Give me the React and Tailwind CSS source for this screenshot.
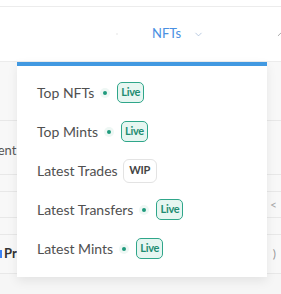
import { ChevronDown } from 'lucide-react'

const items = [
  { label: 'Top NFTs', status: 'live' },
  { label: 'Top Mints', status: 'live' },
  { label: 'Latest Trades', status: 'wip' },
  { label: 'Latest Transfers', status: 'live' },
  { label: 'Latest Mints', status: 'live' },
]

function LiveBadge() {
  return (
    <div className="ml-[6px] flex items-center gap-[7px]">
      <span className="flex h-[10px] w-[10px] items-center justify-center rounded-full bg-[#eef7f4]">
        <span className="h-[4px] w-[4px] rounded-full bg-[#1f9a7c]" />
      </span>
      <span className="flex h-[21px] w-[27px] items-center justify-center rounded-[5px] border border-[#2fa68a] bg-[#e7f6f1] text-[11px] font-bold tracking-[-0.3px] text-[#1f8d72]">
        Live
      </span>
    </div>
  )
}

function WipBadge() {
  return (
    <span className="ml-[5px] flex h-[24px] w-[34px] items-center justify-center rounded-[6px] border border-[#e3e3e3] bg-white text-[11px] font-bold tracking-[-0.3px] text-[#444]">
      WIP
    </span>
  )
}

function App() {
  return (
    <div
      className="relative h-[294px] w-[281px] overflow-hidden bg-white"
      style={{ fontFamily: 'Lato, "Noto Sans", sans-serif' }}
    >
      <div className="h-[7px] border-b border-[#ececec]" />
      <div className="flex h-[55px] items-center border-b border-[#ececec]">
        <span className="ml-[116px] h-[2px] w-[2px] rounded-full bg-[#eee]" />
        <span className="ml-[34px] text-[13px] text-[#4a90e2]">NFTs</span>
        <ChevronDown size={11} strokeWidth={1.5} className="ml-[12px] text-[#9bb3d4]" />
        <ChevronDown size={9} strokeWidth={1.5} className="ml-auto mr-[-4px] rotate-180 text-[#666]" />
      </div>

      <div className="bg-[#f8f8f8]">
        <div className="h-[59px] border-b border-[#e8e8e8]" />
        <div className="flex h-[54px] items-center border-b border-[#e8e8e8] pt-[6px] text-[13px] text-[#555]">
          <span className="ml-[-23px]">Recent</span>
        </div>
        <div className="flex h-[17px] border-b border-[#e8e8e8]" />
        <div className="flex h-[26px] items-center justify-end border-b border-[#e8e8e8] pr-[4px] text-[12px] text-[#aaa]">
          &lt;
        </div>
        <div className="h-[17px] border-b border-[#e8e8e8]" />
        <div className="flex h-[39px] items-center border-b border-[#e8e8e8] text-[13px]">
          <span className="h-[8px] w-[2px] bg-[#3b82f6]" />
          <span className="ml-[2px] font-bold text-[#333]">Pr</span>
          <span className="ml-auto pr-[5px] text-[12px] text-[#999]">)</span>
        </div>
        <div className="h-[30px] bg-[#f6f6f6]" />
      </div>

      <div className="absolute left-[17px] top-[62px] w-[250px] border-t-4 border-[#4299e1] bg-white pb-[9px] pt-[7px] shadow-[0_4px_10px_rgba(0,0,0,0.08)]">
        {items.map((item) => (
          <div key={item.label} className="flex h-[39px] items-center pl-[20px]">
            <span className="text-[14px] text-[#505050]">{item.label}</span>
            {item.status === 'live' ? <LiveBadge /> : <WipBadge />}
          </div>
        ))}
      </div>
    </div>
  )
}

export default App
